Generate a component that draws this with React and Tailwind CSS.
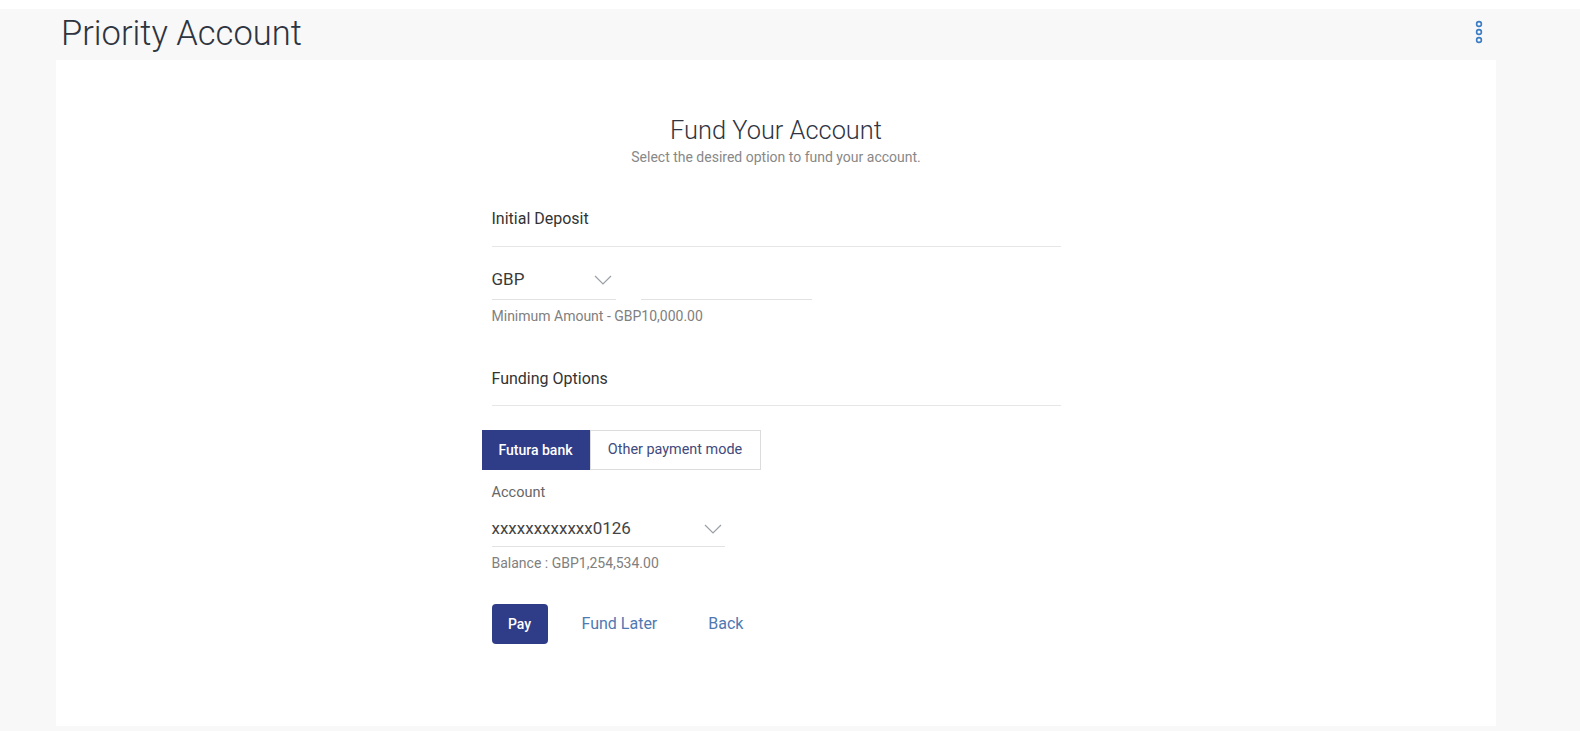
import React, { useState } from 'react';

const Chevron = ({ className }) => (
    <svg className={className} width="18" height="10" viewBox="0 0 18 10" fill="none">
        <path d="M1 1l8 8 8-8" stroke="#9aa0a8" strokeWidth="1.2" />
    </svg>
);

const Kebab = () => (
    <svg width="10" height="24" viewBox="0 0 10 24" fill="none">
        <circle cx="5" cy="4" r="2.4" stroke="#3b7dc4" strokeWidth="1.6" />
        <circle cx="5" cy="12" r="2.4" stroke="#3b7dc4" strokeWidth="1.6" />
        <circle cx="5" cy="20" r="2.4" stroke="#3b7dc4" strokeWidth="1.6" />
    </svg>
);

const App = () => {
    const [mode, setMode] = useState('futura');

    return (
        <div className="min-h-[731px] bg-[#f8f8f8] font-['Roboto',sans-serif]">
            {/* franja superior */}
            <div className="h-[9px] bg-white"></div>

            {/* cabecera */}
            <div className="h-[51px] flex items-center justify-between pl-[61px] pr-[96px]">
                <h1 className="text-[34.5px] font-light text-[#2e3440] leading-none -mt-[2px]">Priority Account</h1>
                <button className="-mt-[6px]"><Kebab /></button>
            </div>

            {/* tarjeta */}
            <div className="ml-[56px] w-[1440px] bg-white h-[666px] pt-[54px]">
                <div className="text-center">
                    <h2 className="text-[25.4px] font-light text-[#2f3542] leading-[32px]">Fund Your Account</h2>
                    <p className="text-[14px] text-[#888] leading-[18px] mt-[2px]">Select the desired option to fund your account.</p>
                </div>

                <div className="w-[569px] mx-auto">
                    {/* Deposito inicial */}
                    <div className="mt-[43px] pb-[17px] border-b border-[#e6e6e6]">
                        <h3 className="text-[16px] text-[#333] leading-[20px]">Initial Deposit</h3>
                    </div>

                    <div className="flex gap-[25px] mt-[13px]">
                        <div className="w-[124px] h-[40px] border-b border-[#e2e2e2] flex items-center justify-between pr-[4px]">
                            <span className="text-[17px] text-[#3a3a3a]">GBP</span>
                            <Chevron />
                        </div>
                        <div className="w-[171px] h-[40px] border-b border-[#e2e2e2]"></div>
                    </div>
                    <p className="text-[14px] text-[#808080] leading-[18px] mt-[7px]">Minimum Amount - GBP10,000.00</p>

                    {/* Opciones de financiacion */}
                    <div className="mt-[44px] pb-[16px] border-b border-[#e6e6e6]">
                        <h3 className="text-[16px] text-[#333] leading-[20px]">Funding Options</h3>
                    </div>

                    <div className="flex mt-[24px] -ml-[10px]">
                        <button
                            onClick={() => setMode('futura')}
                            className={`w-[108px] h-[40px] text-[14px] font-medium border ${mode === 'futura' ? 'bg-[#2f3c88] text-white border-[#2f3c88]' : 'bg-white text-[#3f4a7d] border-[#dcdcdc]'}`}
                        >
                            Futura bank
                        </button>
                        <button
                            onClick={() => setMode('other')}
                            className={`w-[171px] h-[40px] text-[14.4px] border ${mode === 'other' ? 'bg-[#2f3c88] text-white border-[#2f3c88] font-medium' : 'bg-white text-[#3f4a7d] border-[#dcdcdc]'}`}
                        >
                            Other payment mode
                        </button>
                    </div>

                    {/* Cuenta */}
                    <p className="text-[14.5px] text-[#666] leading-[18px] mt-[14px]">Account</p>
                    <div className="w-[233px] h-[36px] mt-[9px] border-b border-[#e2e2e2] flex items-center justify-between pr-[3px]">
                        <span className="text-[17px] text-[#444]">xxxxxxxxxxxx0126</span>
                        <Chevron />
                    </div>
                    <p className="text-[14px] text-[#808080] leading-[18px] mt-[7px]">Balance : GBP1,254,534.00</p>

                    {/* Acciones */}
                    <div className="flex items-center mt-[32px]">
                        <button className="w-[56px] h-[40px] rounded-[4px] bg-[#2f3c88] text-white text-[14px] font-medium">Pay</button>
                        <button className="ml-[34px] text-[16px] text-[#4f79b3]">Fund Later</button>
                        <button className="ml-[51px] text-[16px] text-[#4f79b3]">Back</button>
                    </div>
                </div>
            </div>
        </div>
    );
};

export default App;
